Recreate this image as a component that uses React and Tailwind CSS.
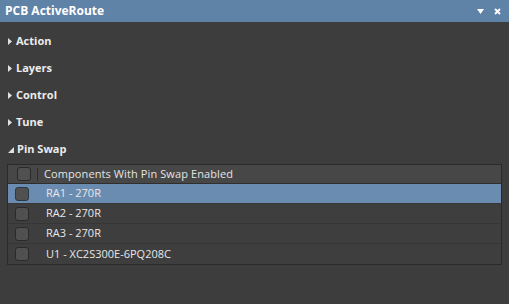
import React from "react";

const font = { fontFamily: '"Open Sans", "Noto Sans", sans-serif' };

function Section({ label, open }) {
  return (
    <div className="flex items-center h-[27px] pl-[8px]">
      {open ? (
        <svg width="6" height="6" viewBox="0 0 6 6" className="mr-[3px]">
          <polygon points="6,0 6,6 0,6" fill="#e0e0e0" />
        </svg>
      ) : (
        <svg width="4" height="7" viewBox="0 0 4 7" className="mr-[4px]">
          <polygon points="0,0 4,3.5 0,7" fill="#e0e0e0" />
        </svg>
      )}
      <span className="text-[11px] font-bold text-[#ececec]">{label}</span>
    </div>
  );
}

function Box({ dark }) {
  return (
    <div
      className={`w-[14px] h-[14px] rounded-[3px] border ${
        dark ? "border-[#2a3848] bg-[#505050]" : "border-[#2a2a2a] bg-[#505050]"
      }`}
    />
  );
}

function Row({ label, selected, last }) {
  return (
    <div
      className={`flex items-center h-[20px] pl-[7px] ${
        selected ? "bg-[#6a8cb0]" : "bg-[#3e3e3e]"
      } ${last ? "" : "border-b border-[#363636]"}`}
    >
      <Box dark={selected} />
      <span className="text-[11px] text-[#e8e8e8] pl-[17px]">{label}</span>
    </div>
  );
}

export default function App() {
  return (
    <div className="w-[509px] h-[304px] bg-[#3d3d3d] flex flex-col" style={font}>
      <div className="h-[22px] bg-[#5f82a7] flex items-center justify-between pl-[5px] pr-[8px]">
        <span className="text-[12px] font-bold text-white">
          PCB ActiveRoute
        </span>
        <div className="flex items-center gap-[10px]">
          <svg width="7" height="5" viewBox="0 0 7 5">
            <polygon points="0,0 7,0 3.5,5" fill="#ffffff" />
          </svg>
          <svg width="7" height="7" viewBox="0 0 7 7">
            <path d="M1 1 L6 6 M6 1 L1 6" stroke="#ffffff" strokeWidth="1.8" />
          </svg>
        </div>
      </div>
      <div className="pt-[6px]">
        <Section label="Action" />
        <Section label="Layers" />
        <Section label="Control" />
        <Section label="Tune" />
        <Section label="Pin Swap" open />
      </div>
      <div className="ml-[7px] mr-[7px] mt-[1px] border border-[#2b2b2b] bg-[#3e3e3e]">
        <div className="flex items-center h-[19px] bg-[#474747] border-b border-[#2f2f2f]">
          <div className="w-[28px] flex justify-center pl-[3px]">
            <Box />
          </div>
          <div className="w-[1px] h-[13px] bg-[#2e2e2e] ml-[1px]" />
          <span className="text-[11px] text-[#e4e4e4] pl-[6px] tracking-[0.1px]">
            Components With Pin Swap Enabled
          </span>
        </div>
        <Row label="RA1 - 270R" selected />
        <Row label="RA2 - 270R" />
        <Row label="RA3 - 270R" />
        <Row label="U1 - XC2S300E-6PQ208C" last />
      </div>
    </div>
  );
}
